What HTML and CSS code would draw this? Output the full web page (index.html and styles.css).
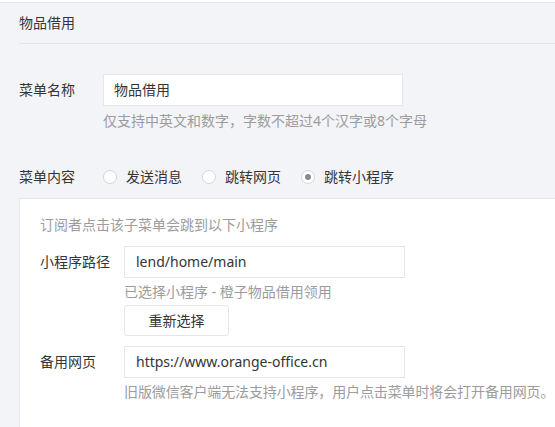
FILE: index.html
```html
<!DOCTYPE html>
<html lang="zh-CN">
<head>
<meta charset="utf-8">
<link rel="stylesheet" href="styles.css">
</head>
<body>
<div class="topline"></div>
<div class="title">物品借用</div>
<div class="form">
  <div class="row row-name">
    <div class="label">菜单名称</div>
    <div class="field">
      <div class="input w300">物品借用</div>
      <div class="hint">仅支持中英文和数字，字数不超过4个汉字或8个字母</div>
    </div>
  </div>
  <div class="row row-radio">
    <div class="label">菜单内容</div>
    <div class="radios">
      <span class="radio"><span class="circle"></span>发送消息</span>
      <span class="radio"><span class="circle"></span>跳转网页</span>
      <span class="radio"><span class="circle checked"></span>跳转小程序</span>
    </div>
  </div>
  <div class="panel">
    <div class="intro">订阅者点击该子菜单会跳到以下小程序</div>
    <div class="row row-path">
      <div class="label">小程序路径</div>
      <div class="field">
        <div class="input w281">lend/home/main</div>
        <div class="hint tight">已选择小程序 - 橙子物品借用领用</div>
        <div class="btn">重新选择</div>
      </div>
    </div>
    <div class="row row-web">
      <div class="label">备用网页</div>
      <div class="field">
        <div class="input w281">https://www.orange-office.cn</div>
        <div class="hint tight long">旧版微信客户端无法支持小程序，用户点击菜单时将会打开备用网页。</div>
      </div>
    </div>
  </div>
</div>
</body>
</html>
```
FILE: styles.css
```css
html, body {
  margin: 0;
  padding: 0;
  background: #f3f4f8;
  overflow: hidden;
}
body {
  font-family: "Noto Sans", "Noto Sans CJK SC", sans-serif;
  font-size: 14px;
  color: #353535;
  width: 555px;
  height: 427px;
  display: flex;
  flex-direction: column;
}
.topline {
  height: 2px;
  background: #ffffff;
  border-bottom: 1px solid #e4e6eb;
}
.title {
  margin-left: 19px;
  padding: 10px 0;
  line-height: 20px;
  border-bottom: 1px solid #e2e4e9;
}
.form {
  flex: 1;
  padding-left: 19px;
  display: flex;
  flex-direction: column;
  min-height: 0;
}
.row {
  display: flex;
  align-items: flex-start;
}
.label {
  flex: 0 0 84px;
  line-height: 32px;
  white-space: nowrap;
}
.field {
  display: flex;
  flex-direction: column;
  align-items: flex-start;
}
.row-name {
  margin-top: 30px;
}
.input {
  box-sizing: border-box;
  height: 32px;
  line-height: 30px;
  border: 1px solid #e4e6eb;
  background: #ffffff;
  padding-left: 10px;
  color: #353535;
  white-space: nowrap;
}
.w300 { width: 300px; }
.w281 { width: 281px; padding-left: 11px; }
.hint {
  margin-top: 5px;
  line-height: 20px;
  color: #9c9c9c;
  white-space: nowrap;
}
.hint.tight { margin-top: 4px; }
.hint.long { letter-spacing: -0.12px; }
.row-radio {
  margin-top: 36px;
}
.row-radio .label {
  line-height: 20px;
}
.radios {
  display: flex;
  gap: 20px;
  line-height: 20px;
}
.radio {
  display: flex;
  align-items: center;
  gap: 9px;
}
.circle {
  box-sizing: border-box;
  width: 14px;
  height: 14px;
  border-radius: 50%;
  border: 1px solid #d3d5da;
  background: #ffffff;
  display: flex;
  align-items: center;
  justify-content: center;
}
.circle.checked::after {
  content: "";
  width: 6px;
  height: 6px;
  border-radius: 50%;
  background: #8a8a8a;
}
.panel {
  flex: 1;
  margin-top: 11px;
  background: #ffffff;
  border: 1px solid #e4e6eb;
  border-right: 0;
  border-bottom: 0;
  padding: 16px 0 0 20px;
}
.intro {
  line-height: 20px;
  color: #9c9c9c;
}
.row-path {
  margin-top: 11px;
}
.btn {
  box-sizing: border-box;
  margin-top: 3px;
  width: 105px;
  height: 31px;
  line-height: 29px;
  border: 1px solid #e4e6eb;
  border-radius: 3px;
  text-align: center;
  background: #ffffff;
}
.row-web {
  margin-top: 10px;
}
```
